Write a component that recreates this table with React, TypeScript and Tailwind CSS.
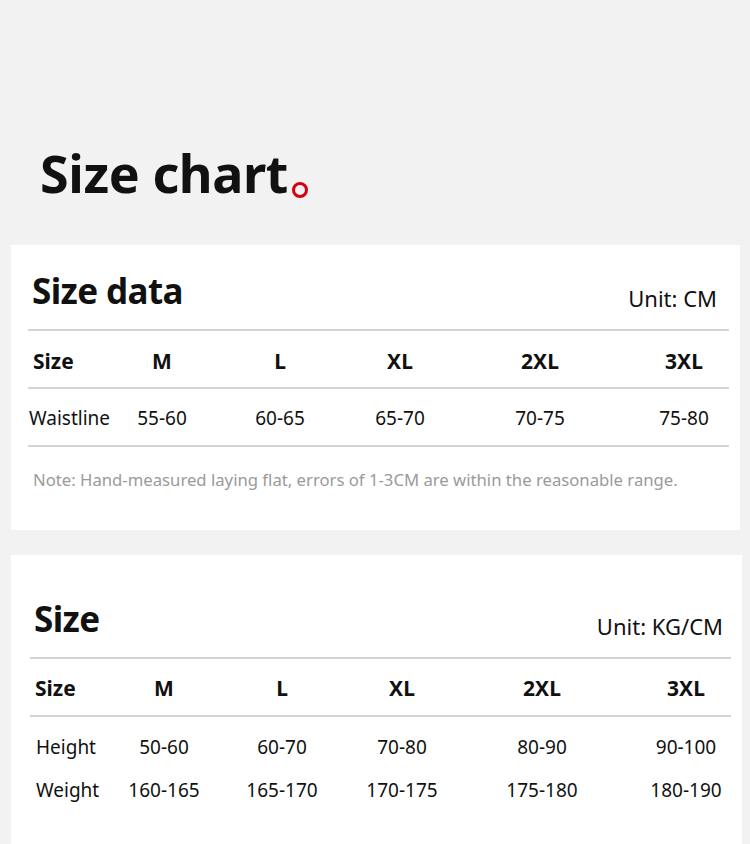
const SIZES = ["M", "L", "XL", "2XL", "3XL"]

const COLS = "grid grid-cols-[80px_108px_128px_112px_168px_105px] items-center"

const Cell = ({ children, last }: { children: React.ReactNode; last?: boolean }) => (
  <div className={last ? "pl-[15px] text-center" : "text-center"}>{children}</div>
)

const Row = ({
  label,
  values,
  bold,
  labelPad = "pl-[1px]",
  className,
}: {
  label: string
  values: string[]
  bold?: boolean
  labelPad?: string
  className: string
}) => (
  <div className={`${COLS} ${className} ${bold ? "font-bold text-[21px]" : "text-[19px]"}`}>
    <div className={labelPad}>{label}</div>
    {values.map((v, i) => (
      <Cell key={v + i} last={i === values.length - 1}>
        {v}
      </Cell>
    ))}
  </div>
)

const CardHeader = ({ title, unit, unitPad }: { title: string; unit: string; unitPad: string }) => (
  <div className="flex items-end justify-between border-b-2 border-[#d4d4d4]">
    <h2 className="pl-[4px] pb-[21px] text-[35px] font-bold leading-none tracking-[-0.6px]">{title}</h2>
    <span className={`${unitPad} pb-[20px] text-[22px] leading-none`}>{unit}</span>
  </div>
)

export default function App() {
  return (
    <main
      className="min-h-[844px] overflow-hidden bg-[#f2f2f2] text-[#111]"
      style={{ fontFamily: '"Noto Sans", "Open Sans", sans-serif' }}
    >
      <div className="flex items-end pl-[40px] pt-[147px]">
        <h1 className="text-[52px] font-bold leading-none tracking-[-0.4px]">Size chart</h1>
        <span className="mb-[1px] ml-[4px] h-[16px] w-[16px] rounded-full border-[3px] border-[#d7000f]" />
      </div>

      <section className="ml-[11px] mt-[46px] h-[285px] w-[729px] bg-white pl-[17px] pr-[11px] pt-[28px]">
        <CardHeader title="Size data" unit="Unit: CM" unitPad="pr-[12px]" />
        <Row
          label="Size"
          values={SIZES}
          bold
          labelPad="pl-[5px]"
          className="h-[58px] border-b-2 border-[#d4d4d4] pt-[5px]"
        />
        <Row
          label="Waistline"
          values={["55-60", "60-65", "65-70", "70-75", "75-80"]}
          className="h-[58px] border-b-2 border-[#d4d4d4] pt-[3px]"
        />
        <p className="pl-[5px] pt-[20px] text-[16.7px] text-[#9a9a9a]">
          Note: Hand-measured laying flat, errors of 1-3CM are within the reasonable range.
        </p>
      </section>

      <section className="ml-[11px] mt-[25px] h-[320px] w-[731px] bg-white pl-[19px] pr-[11px] pt-[46px]">
        <CardHeader title="Size" unit="Unit: KG/CM" unitPad="pr-[8px]" />
        <Row
          label="Size"
          values={SIZES}
          bold
          labelPad="pl-[5px]"
          className="h-[58px] border-b-2 border-[#d4d4d4] pt-[3px]"
        />
        <Row
          label="Height"
          values={["50-60", "60-70", "70-80", "80-90", "90-100"]}
          labelPad="pl-[6px]"
          className="mt-[9px] h-[43px]"
        />
        <Row
          label="Weight"
          values={["160-165", "165-170", "170-175", "175-180", "180-190"]}
          labelPad="pl-[6px]"
          className="h-[43px]"
        />
      </section>
    </main>
  )
}
